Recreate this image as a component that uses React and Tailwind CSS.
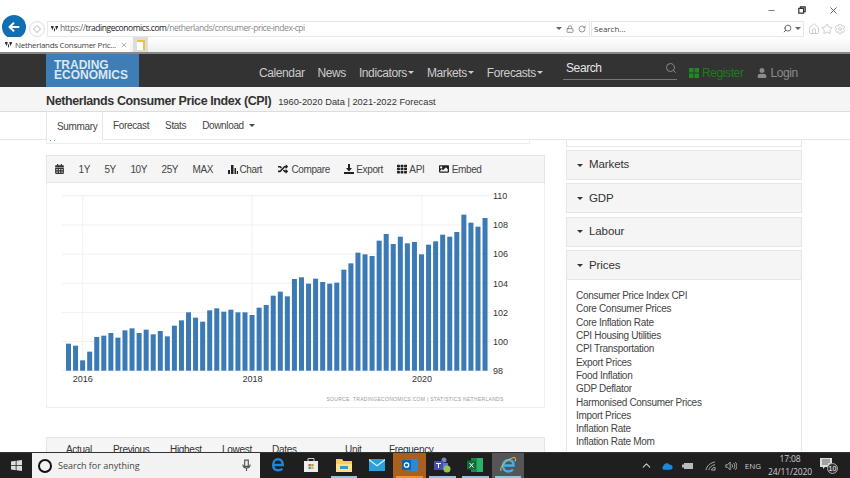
import { FaCalendarAlt, FaRandom, FaTh, FaImage, FaUser } from "react-icons/fa";
import { Search, Home, Star, Settings, RotateCw, Lock, ChevronUp, X, Minus } from "lucide-react";

const tops5 = [476,482,526,500,456,452,444,458,436,430,444,434,448,438,454,422,406,382,398,410,376,370,380,374,382,382,390,368,360,332,320,334,282];
const tops6 = [277,296,281,291,296,293,254,235,203,208,213,167,147,177,155,175,171,208,179,169,149,155,141,89,113,125,99];
const bars = [...tops5, ...tops6].map((t) => 185 + t / 3);

const sidePanels = ["Markets", "GDP", "Labour", "Prices"];
const prices = [
  "Consumer Price Index CPI",
  "Core Consumer Prices",
  "Core Inflation Rate",
  "CPI Housing Utilities",
  "CPI Transportation",
  "Export Prices",
  "Food Inflation",
  "GDP Deflator",
  "Harmonised Consumer Prices",
  "Import Prices",
  "Inflation Rate",
  "Inflation Rate Mom",
];

function Caret({ className }) {
  return <span className={"inline-block w-0 h-0 border-x-[3px] border-x-transparent border-t-[3px] " + className} />;
}

function Favicon({ className }) {
  return (
    <svg viewBox="0 0 8 8" className={className}>
      <path d="M0 1h3v2H2.400v2H1V3H0zM5 1h3v2H7v2H5.600V3H5zM3.400 4h1.200v3H3.400z" fill="#333" />
    </svg>
  );
}

function Chart() {
  const levels = [110, 108, 106, 104, 102, 100, 98];
  return (
    <svg viewBox="47 183 497 224" className="block w-[497px] h-[224px]">
      {levels.map((v, i) => (
        <g key={v}>
          <line x1="62" x2="490" y1={195.7 + i * 29.17} y2={195.7 + i * 29.17} stroke="#f1f1f1" />
          <text x="493" y={199 + i * 29.17} fontSize="9" fill="#333" fontFamily="Liberation Sans">{v}</text>
        </g>
      ))}
      {[82.7, 252, 422].map((x) => (
        <line key={x} x1={x} x2={x} y1="195.700" y2="371" stroke="#f1f1f1" />
      ))}
      {bars.map((top, i) => (
        <rect key={i} x={66 + i * 7.06} y={top} width="5" height={370.7 - top} fill="#3c7ab5" />
      ))}
      {[["2016", 82.7], ["2018", 252.5], ["2020", 422]].map(([t, x]) => (
        <text key={t} x={x} y="382" fontSize="9" fill="#333" textAnchor="middle" fontFamily="Liberation Sans">{t}</text>
      ))}
      <text x="415" y="400.500" fontSize="5" letterSpacing="0.3" fill="#999" textAnchor="middle" fontFamily="Liberation Sans">
        SOURCE:  TRADINGECONOMICS.COM  |  STATISTICS NETHERLANDS
      </text>
    </svg>
  );
}

function Toolbar() {
  return (
    <div className="flex items-center h-[28px] pl-2 gap-[14.500px] bg-[#f5f5f5] border border-[#e6e6e6] text-[10px] tracking-[-0.4px] text-[#444]">
      <FaCalendarAlt className="w-[9px] h-[10px] text-[#333]" />
      <span>1Y</span>
      <span>5Y</span>
      <span>10Y</span>
      <span>25Y</span>
      <span>MAX</span>
      <span className="flex items-center gap-[2px]">
        <svg viewBox="0 0 10 10" className="w-[10px] h-[10px]"><path d="M0 6h2v4H0zM3 1h2.500v9H3zM6.500 4H8v6H6.500zM8.800 7H10v3H8.800z" fill="#222" /></svg>
        Chart
      </span>
      <span className="flex items-center gap-[3px]"><FaRandom className="w-[12px] h-[10px] text-[#222]" />Compare</span>
      <span className="flex items-center gap-[2px]">
        <svg viewBox="0 0 10 10" className="w-[10px] h-[10px]"><path d="M4 0h2v4h2L5 7.500 2 4h2zM0 8h10v2H0z" fill="#222" /></svg>
        Export
      </span>
      <span className="flex items-center gap-[2px]"><FaTh className="w-[10px] h-[10px] text-[#222]" />API</span>
      <span className="flex items-center gap-[3px]"><FaImage className="w-[10px] h-[10px] text-[#222]" />Embed</span>
    </div>
  );
}

function StartLogo() {
  return (
    <svg viewBox="0 0 14 14" className="w-[11px] h-[11px]">
      <path d="M0 2l6-.9V6.700H0zM7 1l7-1v6.700H7zM0 7.500h6v5.600L0 12.200zM7 7.500h7V14l-7-1z" fill="#ddd" />
    </svg>
  );
}

function AppCell({ children, active, line, bg }) {
  return (
    <div className={"flex flex-col w-[32.800px] h-full shrink-0 " + bg}>
      <div className="flex-1 flex items-center justify-center">{children}</div>
      <div className={"h-[2px] mx-[3px] " + (active ? line : "")} />
    </div>
  );
}

function Taskbar() {
  return (
    <div className="flex items-center h-[26px] shrink-0 bg-[#1f1f1f] border-t border-[#333]">
      <div className="flex items-center justify-center w-[32px]"><StartLogo /></div>
      <div className="flex items-center w-[228px] h-full bg-[#f2f2f2] pl-[6px] pr-[9px]">
        <div className="w-[14px] h-[14px] rounded-full border-2 border-[#111]" />
        <span className="ml-[6px] text-[9px] text-[#444] font-['Open_Sans',sans-serif]">Search for anything</span>
        <svg viewBox="0 0 10 14" className="ml-auto w-[9px] h-[13px]"><path d="M3 1h4v7H3zM1 6c0 5 8 5 8 0M5 10v3" fill="none" stroke="#555" strokeWidth="1.300" /></svg>
      </div>
      <div className="flex h-full ml-[2px]">
        <AppCell bg="">
          <svg viewBox="0 0 16 16" className="w-[14px] h-[15px]">
            <path d="M2.500 8.500h11C13.500 4 11 2 8 2S2.500 4.500 2.500 8.500s2.500 6 5.500 6c2 0 4-.6 5-1.500" fill="none" stroke="#1b86d8" strokeWidth="2.800" />
          </svg>
        </AppCell>
        <AppCell bg="">
          <svg viewBox="0 0 16 16" className="w-[16px] h-[16px]">
            <path d="M1 4h14v11H1z" fill="#eee" />
            <path d="M5 4V1.500h6V4" fill="none" stroke="#ccc" />
            <path d="M5.500 7h2.300v2.300H5.500z" fill="#e8542f" /><path d="M8.300 7h2.300v2.300H8.300z" fill="#7fba3c" />
            <path d="M5.500 9.800h2.300v2.300H5.500z" fill="#2f9be8" /><path d="M8.300 9.800h2.300v2.300H8.300z" fill="#f6b81e" />
          </svg>
        </AppCell>
        <AppCell bg="" active line="bg-[#8cc4ec]">
          <svg viewBox="0 0 16 14" className="w-[16px] h-[14px]">
            <path d="M0 1h6l1.500 2H16v11H0z" fill="#f4cf5c" />
            <path d="M0 6h16v8H0z" fill="#ffe28a" />
            <path d="M4 8h8v3H4z" fill="#2f9bd8" />
          </svg>
        </AppCell>
        <AppCell bg="">
          <svg viewBox="0 0 16 12" className="w-[16px] h-[12px]">
            <path d="M0 0h16v12H0z" fill="#2aa0dc" />
            <path d="M0 0l8 6 8-6v1.500L8 7.500 0 1.500z" fill="#dff2fc" />
          </svg>
        </AppCell>
        <AppCell bg="bg-[#a9601f]" active line="bg-[#ff8a1e]">
          <svg viewBox="0 0 16 14" className="w-[16px] h-[14px]">
            <path d="M5 1h11v12H5z" fill="#2a8ad8" />
            <path d="M0 2h9v10H0z" fill="#0b63a8" />
            <circle cx="4.500" cy="7" r="2.200" fill="none" stroke="#fff" strokeWidth="1.300" />
          </svg>
        </AppCell>
        <AppCell bg="" active line="bg-[#8cc4ec]">
          <svg viewBox="0 0 18 16" className="w-[18px] h-[16px]">
            <circle cx="11" cy="3" r="2.500" fill="#7b83d0" />
            <path d="M7 6h8v7H7z" fill="#6a72c4" />
            <path d="M1 4h9v9H1z" fill="#4650a8" />
            <path d="M3 6h5v1H6v4H5V7H3z" fill="#fff" />
            <circle cx="14" cy="12" r="3.500" fill="#92c353" />
          </svg>
        </AppCell>
        <AppCell bg="" active line="bg-[#8cc4ec]">
          <svg viewBox="0 0 16 14" className="w-[16px] h-[14px]">
            <path d="M4 0h12v14H4z" fill="#1f8a4c" />
            <path d="M10 0h6v14h-6z" fill="#2cb36a" />
            <path d="M0 2.500h9v9H0z" fill="#106c38" />
            <path d="M2.500 5l4 4.500M6.500 5l-4 4.500" stroke="#fff" />
          </svg>
        </AppCell>
        <AppCell bg="bg-[#555]" active line="bg-[#8cc4ec]">
          <svg viewBox="0 0 18 18" className="w-[18px] h-[18px]">
            <path d="M4 9.500h10.500C14.500 6 12.500 4 9.500 4S4 6.500 4 10s2.500 5.500 5.500 5.500c2 0 3.500-.8 4.500-2" fill="none" stroke="#3fb0ec" strokeWidth="2.400" />
            <path d="M2 15C0 11 8 3 15 1.500c2-.4 2 2 1 4" fill="none" stroke="#e8c14a" strokeWidth="1" />
          </svg>
        </AppCell>
      </div>
      <div className="ml-auto flex items-center h-full text-[#ccc]">
        <ChevronUp className="w-[13px] h-[13px] mr-[8px]" />
        <svg viewBox="0 0 14 9" className="w-[12px] h-[8px] mr-[9px]"><path d="M3 9a3 3 0 0 1 0-5 4 4 0 0 1 7-1 3 3 0 0 1 1 6z" fill="#1b8ade" /></svg>
        <svg viewBox="0 0 12 8" className="w-[12px] h-[8px] mr-[11px]"><path d="M2 1h9v6H2zM0 2.500h2v3H0z" fill="#bbb" /></svg>
        <svg viewBox="0 0 12 11" className="w-[11px] h-[10px] mr-[9px]"><path d="M1 10C2 5 6 2 11 1M4 10c1-3 3-5 7-6M7 10c.5-1.500 2-3 4-3v3z" fill="none" stroke="#bbb" /></svg>
        <svg viewBox="0 0 14 11" className="w-[12px] h-[10px] mr-[5px]"><path d="M1 4h2l3-3v9L3 7H1zM8 3.500c1 1 1 3 0 4M10 2c2 2 2 5 0 7M12 1c2.500 2.500 2.500 6.500 0 9" fill="none" stroke="#bbb" /></svg>
        <span className="text-[8px] w-[22px] text-center font-['Open_Sans',sans-serif]">ENG</span>
        <div className="flex flex-col items-center w-[52px] text-[8.500px] tracking-[-0.1px] leading-[12.500px] font-['Open_Sans',sans-serif]">
          <span>17:08</span>
          <span>24/11/2020</span>
        </div>
        <div className="relative w-[18px] h-[16px] ml-[4px] mr-[12px]">
          <svg viewBox="0 0 12 12" className="w-[12px] h-[12px]"><path d="M0 0h12v9H5l-2 2V9H0z" fill="#ddd" /><path d="M2 2h8M2 4h8M2 6h6" stroke="#666" /></svg>
          <span className="absolute right-0 bottom-0 flex items-center justify-center w-[11px] h-[11px] rounded-full bg-[#333] border border-[#aaa] text-[7px] leading-none text-white">10</span>
        </div>
      </div>
    </div>
  );
}

export default function App() {
  return (
    <div className="flex flex-col w-[850px] h-[478px] overflow-hidden bg-white font-['Liberation_Sans',Arial,sans-serif]">
      {/* browser window */}
      <div className="shrink-0 h-[54px] border-b-2 border-[#888]">
        <div className="flex items-center justify-end h-[20px] text-[#555]">
          <Minus className="w-[9px] h-[9px] mr-[22px]" />
          <svg viewBox="0 0 10 10" className="w-[8px] h-[8px] mr-[22px]"><path d="M1 3h6v6H1zM3 3V1h6v6H7" fill="none" stroke="#333" strokeWidth="1.500" /></svg>
          <X className="w-[11px] h-[11px] mr-[11px]" />
        </div>
        <div className="flex items-center h-[17px] pl-[2px]">
          <div className="flex items-center justify-center shrink-0 w-[24px] h-[24px] -mt-[3px] rounded-full bg-[#0f6fb3]">
            <svg viewBox="0 0 16 16" className="w-[14px] h-[14px]"><path d="M14 8H3M8 3L3 8l5 5" fill="none" stroke="#fff" strokeWidth="2.400" /></svg>
          </div>
          <div className="flex items-center justify-center shrink-0 w-[16px] h-[16px] ml-[3px] rounded-full border border-[#ddd]">
            <span className="w-[6px] h-[6px] rotate-45 border border-[#ccc]" />
          </div>
          <div className="flex items-center w-[543px] h-[16px] ml-[2px] border border-[#e8e8e8] font-['Open_Sans',sans-serif] text-[8.500px] tracking-[-0.45px]">
            <Favicon className="w-[7px] h-[7px] ml-[3px] mr-[2px]" />
            <span className="text-[#666]">https://</span>
            <span className="text-[#222]">tradingeconomics.com</span>
            <span className="text-[#888]">/netherlands/consumer-price-index-cpi</span>
            <Caret className="ml-auto border-t-[#666]" />
            <Lock className="w-[8px] h-[8px] ml-[4px] text-[#666]" />
            <RotateCw className="w-[8px] h-[8px] ml-[4px] mr-[3px] text-[#666]" />
          </div>
          <div className="flex items-center w-[213px] h-[16px] ml-[1px] border border-[#e8e8e8] pl-[2px] font-['Open_Sans',sans-serif] text-[8px] text-[#444]">
            Search...
            <Search className="ml-auto w-[9px] h-[9px] -scale-x-100 text-[#444]" />
            <Caret className="ml-[3px] mr-[2px] border-t-[#666]" />
          </div>
          <Home className="w-[12px] h-[12px] ml-[4px] text-[#ccc]" />
          <Star className="w-[12px] h-[12px] ml-[1px] text-[#ccc]" />
          <Settings className="w-[12px] h-[12px] ml-[1px] text-[#ccc]" />
        </div>
        <div className="flex items-center h-[15px] bg-gradient-to-b from-white to-[#efefef]">
          <div className="flex items-center w-[130px] h-full bg-white pl-[5px] font-['Open_Sans',sans-serif] text-[8px] tracking-[-0.3px] text-[#444]">
            <Favicon className="w-[7px] h-[7px] mr-[3px] shrink-0" />
            <span className="whitespace-nowrap">Netherlands Consumer Pric...</span>
            <X className="w-[8px] h-[8px] ml-auto mr-[2px] text-[#888]" />
          </div>
          <div className="flex items-center justify-center w-[15px] h-full ml-[3px] bg-[#ddd]">
            <div className="w-[8px] h-[10px] bg-white border-t-2 border-r-2 border-[#f0c040]" />
          </div>
        </div>
      </div>

      {/* site nav */}
      <div className="flex shrink-0 h-[33px] pl-[46px] bg-[#333] text-[12px] tracking-[-0.4px] text-[#ccc]">
        <div className="w-[93px] h-full pl-[8px] pt-[6px] bg-[#3e7db6] text-[12px] leading-[10px] font-bold tracking-normal text-[#dbe7f1]">
          TRADING<br />ECONOMICS
        </div>
        <div className="flex items-center w-[283px] ml-[120px] pt-[4px] gap-[13px]">
          <span>Calendar</span>
          <span>News</span>
          <span className="flex items-center gap-[1px]">Indicators<Caret className="border-t-[#ccc]" /></span>
          <span className="flex items-center gap-[1px]">Markets<Caret className="border-t-[#ccc]" /></span>
          <span className="flex items-center gap-[1px]">Forecasts<Caret className="border-t-[#ccc]" /></span>
        </div>
        <div className="flex items-center justify-between w-[114px] h-[23px] mt-[3px] ml-[21px] pl-[3px] border-b border-[#777] text-[#e5e5e5]">
          Search
          <Search className="w-[12px] h-[12px] text-[#888]" />
        </div>
        <div className="flex items-center ml-[12px] pt-[4px] text-[#1f7a1f]">
          <svg viewBox="0 0 10 10" className="w-[10px] h-[10px] mr-[3px]"><path d="M0 0h4.500v4.500H0zM5.500 0H10v4.500H5.500zM0 5.500h4.500V10H0zM5.500 5.500H10V10H5.500z" fill="#1f8a1f" /></svg>
          Register
        </div>
        <div className="flex items-center ml-[14px] pt-[4px] text-[#8c8c8c]">
          <FaUser className="w-[10px] h-[10px] mr-[3px]" />
          Login
        </div>
      </div>

      {/* page title */}
      <div className="flex items-baseline shrink-0 h-[25px] pl-[46px] pt-[5px] bg-[#f5f5f5] border-b border-[#ddd]">
        <span className="text-[12.500px] tracking-[-0.4px] font-bold text-[#333]">Netherlands Consumer Price Index (CPI)</span>
        <span className="ml-[7px] text-[9.300px] text-[#333]">1960-2020 Data | 2021-2022 Forecast</span>
      </div>

      {/* tabs */}
      <div className="flex shrink-0 h-[28px] pl-[46px] border-b border-[#e6e6e6] text-[10px] tracking-[-0.35px] text-[#444]">
        <div className="flex items-center w-[57px] h-[28px] pl-[10px] bg-white border-x border-[#e6e6e6]">Summary</div>
        <div className="flex items-center ml-[10px] gap-[16px]">
          <span>Forecast</span>
          <span>Stats</span>
          <span className="flex items-center gap-[5px]">Download<Caret className="border-t-[#444]" /></span>
        </div>
      </div>

      {/* content */}
      <div className="flex flex-1 min-h-0 pl-[46px] overflow-hidden">
        <div className="w-[499px] shrink-0">
          <div className="flex items-start gap-[3px] w-[484px] h-[4px] pl-[3px] border-x border-b border-[#eee]">
            <span className="w-px h-px bg-[#5aa0d8]" />
            <span className="w-px h-px bg-[#5aa0d8]" />
          </div>
          <div className="mt-[11px]"><Toolbar /></div>
          <div className="border-x border-b border-[#eee]"><Chart /></div>
          <div className="flex items-center h-[24px] mt-[29px] pl-[19px] pt-[1px] bg-[#f5f5f5] border border-[#e6e6e6] text-[10px] tracking-[-0.3px] text-[#333]">
            <span className="w-[47px]">Actual</span>
            <span className="w-[57px]">Previous</span>
            <span className="w-[52px]">Highest</span>
            <span className="w-[50px]">Lowest</span>
            <span className="w-[73px]">Dates</span>
            <span className="w-[44px]">Unit</span>
            <span>Frequency</span>
          </div>
        </div>
        <div className="w-[236px] ml-[21px] shrink-0">
          <div className="h-[7px] border-x border-b border-[#e6e6e6]" />
          <div className="flex flex-col gap-[3.400px] mt-[3px]">
            {sidePanels.map((p) => (
              <div key={p} className="flex items-center h-[30px] pl-[10px] bg-[#f5f5f5] border border-[#e6e6e6] text-[11.500px] tracking-[-0.1px] text-[#333]">
                <Caret className="mr-[6px] border-t-[#333]" />
                {p}
              </div>
            ))}
          </div>
          <div className="-mt-px h-[172px] pt-[10px] pl-[9px] border-x border-[#e6e6e6] text-[10px] tracking-[-0.3px] leading-[13.300px] text-[#444]">
            {prices.map((p) => (
              <div key={p}>{p}</div>
            ))}
          </div>
        </div>
      </div>

      <Taskbar />
    </div>
  );
}
